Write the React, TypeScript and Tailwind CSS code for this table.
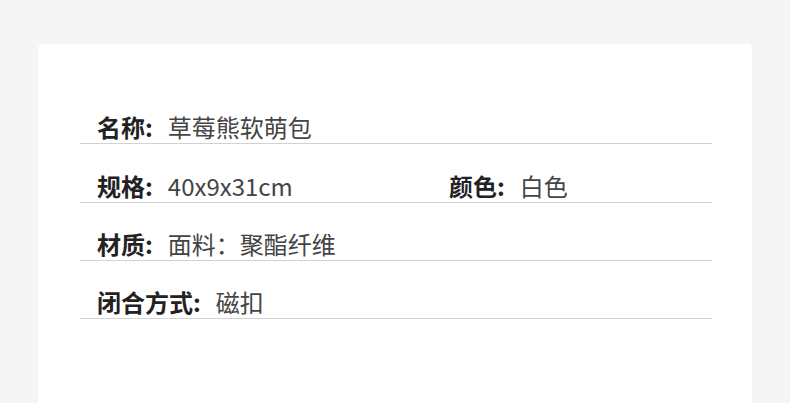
const ROWS: { label: string; value: string }[][] = [
  [{ label: "名称", value: "草莓熊软萌包" }],
  [
    { label: "规格", value: "40x9x31cm" },
    { label: "颜色", value: "白色" },
  ],
  [{ label: "材质", value: "面料：聚酯纤维" }],
  [{ label: "闭合方式", value: "磁扣" }],
];

function Cell({ label, value, wide }: { label: string; value: string; wide?: boolean }) {
  return (
    <div className={wide ? "flex w-[352px] shrink-0 items-center" : "flex items-center"}>
      <span className="font-bold text-[#222222]">{label}:</span>
      <span className="ml-[15px] text-[#444444]">{value}</span>
    </div>
  );
}

export default function App() {
  return (
    <div
      className="h-[403px] w-[790px] overflow-hidden bg-[#f5f5f5] pl-[38px] pt-[44px]"
      style={{ fontFamily: '"Noto Sans CJK SC", "Noto Sans", sans-serif' }}
    >
      <div className="h-[420px] w-[714px] rounded-[5px] bg-white pl-[42px] pr-[40px] pt-[42px]">
        {ROWS.map((row, i) => (
          <div
            key={i}
            className="flex border-b border-[#d2d2d2] pl-[17px] pt-[25.33px] text-[24px] leading-[32px]"
          >
            {row.map((c, j) => (
              <Cell key={c.label} label={c.label} value={c.value} wide={row.length > 1 && j === 0} />
            ))}
          </div>
        ))}
      </div>
    </div>
  );
}
